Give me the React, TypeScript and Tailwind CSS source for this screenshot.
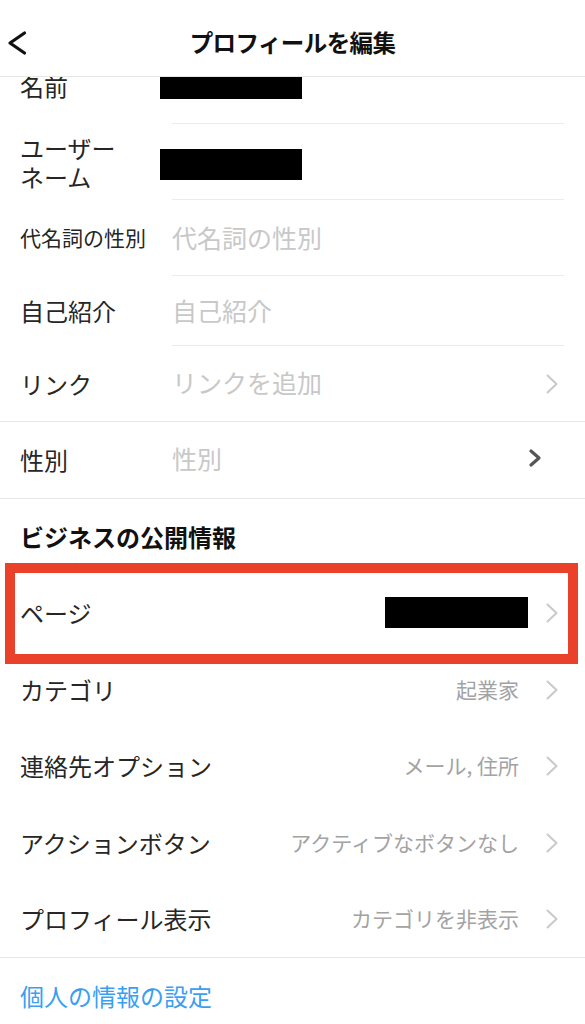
import React from "react";

const FONT = { fontFamily: '"Noto Sans CJK JP", "Noto Sans", sans-serif' };

function Chevron({ dark = false }: { dark?: boolean }) {
  if (dark) {
    return (
      <svg width="14" height="20" viewBox="0 0 14 20" className="shrink-0">
        <path d="M3 3 L11 10 L3 17" fill="none" stroke="#555555" strokeWidth="3.2" strokeLinecap="round" strokeLinejoin="round" />
      </svg>
    );
  }
  return (
    <svg width="12" height="20" viewBox="0 0 12 20" className="shrink-0">
      <path d="M1.5 1.5 L10.5 10 L1.5 18.5" fill="none" stroke="#c9c9c9" strokeWidth="2" strokeLinecap="round" strokeLinejoin="round" />
    </svg>
  );
}

function Redacted({ className }: { className: string }) {
  return <div className={`bg-black ${className}`} />;
}

// upper form rows: label column + value column with an inset separator
function FieldRow({
  label,
  children,
  height = "h-[76px]",
  fullBorder = false,
  labelClass = "text-[24px]",
}: {
  label: React.ReactNode;
  children?: React.ReactNode;
  height?: string;
  fullBorder?: boolean;
  labelClass?: string;
}) {
  if (fullBorder) {
    return (
      <div className={`flex items-center ${height} border-b border-[#e6e6e6]`}>
        <div className={`w-[172px] pl-[20px] text-[#262626] ${labelClass}`}>{label}</div>
        <div className="flex-1 flex items-center">{children}</div>
      </div>
    );
  }
  return (
    <div className={`flex ${height}`}>
      <div className={`w-[172px] pl-[20px] flex items-center text-[#262626] ${labelClass}`}>{label}</div>
      <div className="flex-1 mr-[21px] flex items-center border-b border-[#ebebeb]">{children}</div>
    </div>
  );
}

function Placeholder({ text }: { text: string }) {
  return <span className="text-[25px] text-[#c8c8c8] leading-none">{text}</span>;
}

function BizRow({
  label,
  value,
  height = "h-[77px]",
  children,
  border = false,
}: {
  label: string;
  value?: string;
  height?: string;
  children?: React.ReactNode;
  border?: boolean;
}) {
  return (
    <div className={`relative flex items-center ${height} pl-[20px] pr-[27px] ${border ? "border-b border-[#e6e6e6]" : ""}`}>
      <span className="flex-1 text-[24px] text-[#262626]">{label}</span>
      {value && <span className="text-[21px] text-[#a3a3a3] mr-[27px]">{value}</span>}
      {children}
      <Chevron />
    </div>
  );
}

export default function App() {
  return (
    <div className="w-[585px] h-[1024px] bg-white overflow-hidden flex flex-col" style={FONT}>
      {/* Header */}
      <header className="h-[77px] shrink-0 grid grid-cols-[80px_1fr_80px] items-center pt-[10px] border-b border-[#e6e6e6] relative z-10 bg-white">
        <div className="flex items-center">
          <svg width="30" height="28" viewBox="0 0 30 28">
            <path d="M24.5 4 L10 14 L24.5 24" fill="none" stroke="#111111" strokeWidth="3.2" strokeLinecap="round" strokeLinejoin="round" />
          </svg>
        </div>
        <h1 className="text-center text-[23.5px] font-bold text-[#111111] tracking-tight">プロフィールを編集</h1>
        <div />
      </header>

      {/* Scrolled content */}
      <div className="flex-1 overflow-hidden">
        <div className="-mt-[29px]">
          <FieldRow label="名前">
            <Redacted className="-ml-[12px] mt-[-2px] w-[142px] h-[28px]" />
          </FieldRow>
          <FieldRow label={<span className="block leading-[29px]">ユーザー<br />ネーム</span>}>
            <Redacted className="-ml-[12px] mt-[6px] w-[142px] h-[31px]" />
          </FieldRow>
          <FieldRow label="代名詞の性別" labelClass="text-[21px]">
            <Placeholder text="代名詞の性別" />
          </FieldRow>
          <FieldRow label="自己紹介" height="h-[70px]">
            <Placeholder text="自己紹介" />
          </FieldRow>
          <FieldRow label="リンク" fullBorder>
            <div className="flex-1 flex items-center pr-[27px]">
              <span className="flex-1">
                <Placeholder text="リンクを追加" />
              </span>
              <Chevron />
            </div>
          </FieldRow>
          <FieldRow label="性別" fullBorder height="h-[77px]">
            <div className="flex-1 flex items-center pr-[43px]">
              <span className="flex-1">
                <Placeholder text="性別" />
              </span>
              <div className="-mt-[5px]">
                <Chevron dark />
              </div>
            </div>
          </FieldRow>

          {/* Business section */}
          <div className="h-[75px] flex items-center pl-[20px]">
            <h2 className="text-[24px] font-bold text-[#111111]">ビジネスの公開情報</h2>
          </div>

          <BizRow label="ページ">
            <Redacted className="w-[143px] h-[31px] mr-[18px]" />
            {/* annotation frame */}
            <div className="absolute left-[5px] top-[-11px] w-[573px] h-[101px] border-[10px] border-[#e9412a] pointer-events-none" />
          </BizRow>
          <BizRow label="カテゴリ" value="起業家" />
          <BizRow label="連絡先オプション" value="メール, 住所" height="h-[76px]" />
          <BizRow label="アクションボタン" value="アクティブなボタンなし" />
          <BizRow label="プロフィール表示" value="カテゴリを非表示" border />

          <div className="h-[76px] flex items-center pl-[20px]">
            <span className="text-[24px] text-[#3a9ff2]">個人の情報の設定</span>
          </div>
        </div>
      </div>
    </div>
  );
}
